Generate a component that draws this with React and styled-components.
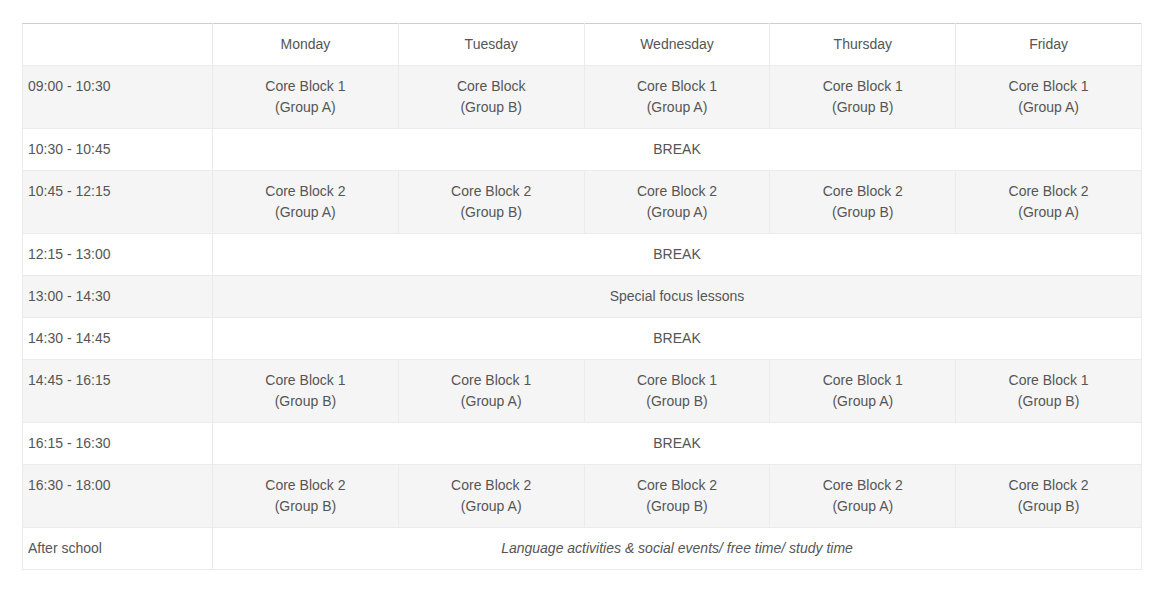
import React from 'react'
import styled, { createGlobalStyle } from 'styled-components'

const GlobalStyle = createGlobalStyle`
  body {
    margin: 0;
    background: #fff;
    font-family: "Liberation Sans", Arial, sans-serif;
  }
`

const Wrapper = styled.div`
  padding: 23px 23px 0 22px;
`

const Table = styled.table`
  width: 1120px;
  border-collapse: collapse;
  table-layout: fixed;
  font-size: 14px;
  line-height: 21px;
  color: #555;
`

const HeadCell = styled.th`
  font-weight: normal;
  text-align: center;
  padding: 10px 5px;
  border: 1px solid #ebebeb;
  border-top: 1px solid #cfcfcf;
  vertical-align: top;
`

const Row = styled.tr`
  background: ${p => (p.$striped ? '#f5f5f5' : '#fff')};
`

const TimeCell = styled.td`
  padding: 10px 5px;
  border: 1px solid #ebebeb;
  vertical-align: top;
  text-align: left;
`

const Cell = styled.td`
  padding: 10px 5px;
  border: 1px solid #ebebeb;
  vertical-align: top;
  text-align: center;
  font-style: ${p => (p.$italic ? 'italic' : 'normal')};
`

const days = ['Monday', 'Tuesday', 'Wednesday', 'Thursday', 'Friday']

const rows = [
  { time: '09:00 - 10:30', blocks: [['Core Block 1', 'A'], ['Core Block', 'B'], ['Core Block 1', 'A'], ['Core Block 1', 'B'], ['Core Block 1', 'A']] },
  { time: '10:30 - 10:45', span: 'BREAK' },
  { time: '10:45 - 12:15', blocks: [['Core Block 2', 'A'], ['Core Block 2', 'B'], ['Core Block 2', 'A'], ['Core Block 2', 'B'], ['Core Block 2', 'A']] },
  { time: '12:15 - 13:00', span: 'BREAK' },
  { time: '13:00 - 14:30', span: 'Special focus lessons' },
  { time: '14:30 - 14:45', span: 'BREAK' },
  { time: '14:45 - 16:15', blocks: [['Core Block 1', 'B'], ['Core Block 1', 'A'], ['Core Block 1', 'B'], ['Core Block 1', 'A'], ['Core Block 1', 'B']] },
  { time: '16:15 - 16:30', span: 'BREAK' },
  { time: '16:30 - 18:00', blocks: [['Core Block 2', 'B'], ['Core Block 2', 'A'], ['Core Block 2', 'B'], ['Core Block 2', 'A'], ['Core Block 2', 'B']] },
  { time: 'After school', span: 'Language activities & social events/ free time/ study time', italic: true }
]

export default function App() {
  return (
    <Wrapper>
      <GlobalStyle />
      <Table>
        <colgroup>
          <col style={{ width: 190 }} />
          {days.map(d => <col key={d} />)}
        </colgroup>
        <thead>
          <tr>
            <HeadCell />
            {days.map(d => <HeadCell key={d}>{d}</HeadCell>)}
          </tr>
        </thead>
        <tbody>
          {rows.map((row, i) => (
            <Row key={row.time} $striped={i % 2 === 0}>
              <TimeCell>{row.time}</TimeCell>
              {row.span
                ? <Cell colSpan={5} $italic={row.italic}>{row.span}</Cell>
                : row.blocks.map(([name, group], j) => (
                  <Cell key={j}>
                    {name}<br />(Group {group})
                  </Cell>
                ))}
            </Row>
          ))}
        </tbody>
      </Table>
    </Wrapper>
  )
}
